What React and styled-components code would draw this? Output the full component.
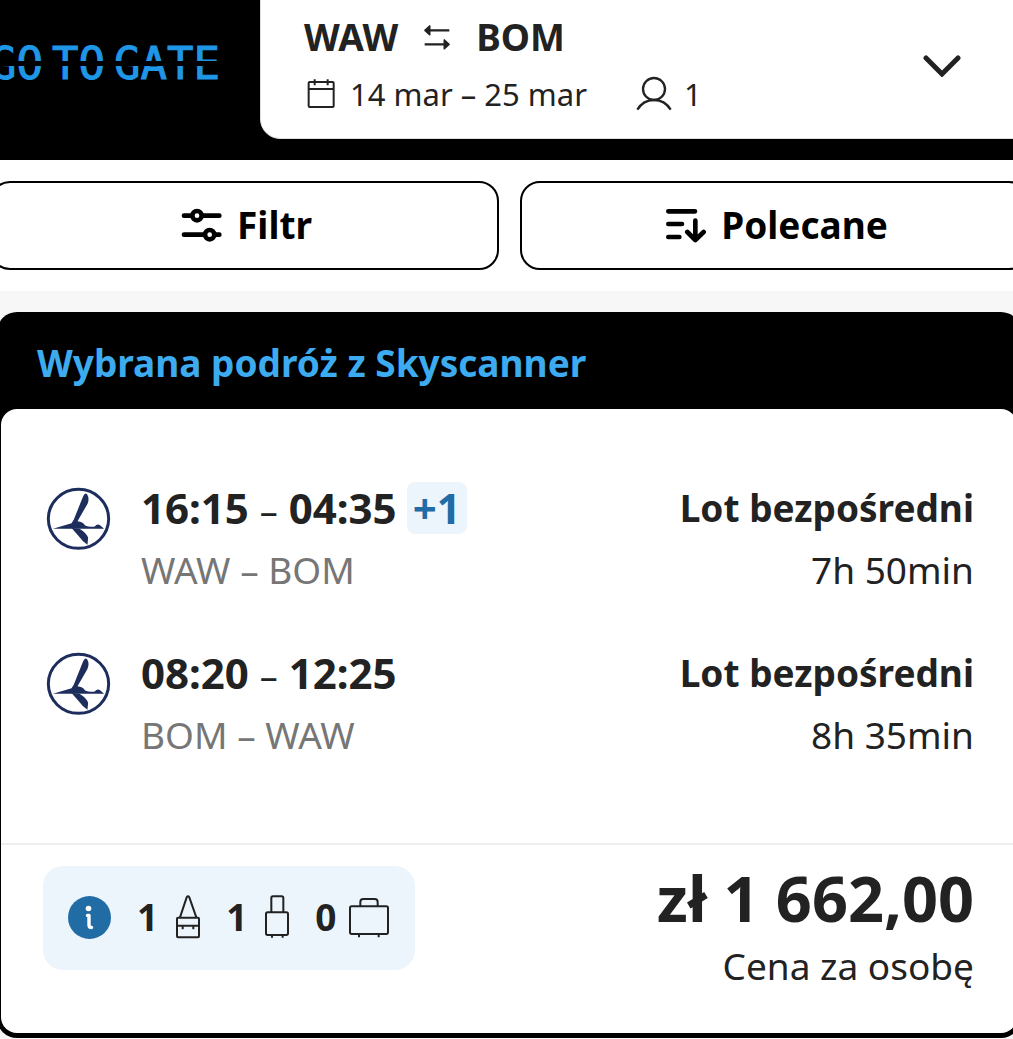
import React from "react";
import styled, { createGlobalStyle } from 'styled-components';

const GlobalStyle = createGlobalStyle`
* {
  box-sizing: border-box;
}
body {
  margin: 0;
  background-color: #f7f7f7;
  color: #222;
  font-family: "Noto Sans", "Open Sans", sans-serif;
  overflow-x: hidden;
}
button {
  font-family: inherit;
  color: inherit;
  cursor: pointer;
}
svg {
  display: block;
  flex: none;
}
`

const Page = styled.div`
overflow: hidden;
`

const Header = styled.header`
display: flex;
align-items: flex-start;
background-color: #000;
padding-bottom: 21px;
`

/* the black strip is the thin cut through the middle of the letters */
const LogoLink = styled.a`
position: relative;
display: flex;
flex: none;
justify-content: flex-end;
gap: 9px;
width: 260px;
padding-top: 39px;
padding-right: 40px;
text-decoration: none;
white-space: nowrap;

&::after {
  content: "";
  position: absolute;
  top: 61px;
  left: 0;
  right: 0;
  height: 5px;
  background-color: #000;
}
`

const LogoText = styled.span`
font-family: "DejaVu Sans Mono", monospace;
font-size: 44px;
line-height: 50px;
color: #1f97e6;
-webkit-text-stroke: 1px #1f97e6;
`

const SearchBox = styled.button`
display: flex;
flex: 1;
align-items: center;
justify-content: space-between;
margin: -20px -20px 0 0;
padding: 32px 71px 20px 43px;
border: 1px solid #ddd;
border-radius: 20px;
background-color: #fff;
text-align: left;
`

const SearchInfo = styled.span`
display: flex;
flex-direction: column;
gap: 9px;
`

const SearchRow = styled.span`
display: flex;
align-items: center;
gap: ${props => props.$gap};
font-size: ${props => props.$size};
font-weight: ${props => props.$bold ? 700 : 400};
line-height: 48px;
`

const SearchItem = styled.span`
display: flex;
align-items: center;
gap: 12px;
`

const Toolbar = styled.div`
padding: 21px 0;
background-color: #fff;
`

const ToolbarInner = styled.div`
display: flex;
gap: 21px;
margin: 0 -16px 0 -10px;
`

const ToolbarButton = styled.button`
display: flex;
flex: 1;
align-items: center;
justify-content: center;
gap: 14px;
height: 89px;
padding: 0 0 2px 4px;
border: 2px solid #000;
border-radius: 20px;
background-color: #fff;
color: #000;
font-size: 37px;
font-weight: 700;
line-height: 52px;
`

const Card = styled.section`
margin: 21px -8px 0 -3px;
padding: 0 4px 5px;
border-radius: 20px;
background-color: #000;
`

const CardTitle = styled.h2`
margin: 0;
padding: 25px 36px 20px;
color: #3dabf0;
font-size: 37px;
font-weight: 700;
line-height: 52px;
`

const CardBody = styled.div`
border-radius: 16px;
background-color: #fff;
`

const Trips = styled.div`
display: flex;
flex-direction: column;
gap: 49px;
padding: 71px 43px 82px 45px;
`

const Trip = styled.div`
display: flex;
align-items: flex-start;
`

const AirlineLogo = styled.svg`
width: 65px;
height: 63px;
margin-top: 7px;
`

const TripColumn = styled.div`
display: flex;
flex: ${props => props.$grow ? 1 : 'none'};
flex-direction: column;
gap: 8px;
margin-left: 30px;
text-align: ${props => props.$grow ? 'left' : 'right'};
`

const Times = styled.div`
display: flex;
align-items: center;
gap: 10px;
height: 56px;
font-size: 42px;
font-weight: 700;
line-height: 56px;
`

const Dash = styled.span`
font-size: 36px;
font-weight: 400;
line-height: 36px;
`

const DayBadge = styled.span`
padding: 0 6px;
border-radius: 8px;
background-color: #edf5fc;
color: #226ca5;
line-height: 52px;
`

const TripText = styled.div`
color: ${props => props.$muted ? '#767676' : '#222'};
font-size: 37px;
font-weight: ${props => props.$bold ? 700 : 400};
line-height: ${props => props.$bold ? '56px' : '52px'};
`

const Footer = styled.div`
display: flex;
align-items: flex-start;
justify-content: space-between;
padding: 15px 43px 41px 42px;
border-top: 2px solid #eee;
`

const Bags = styled.div`
display: flex;
align-items: center;
gap: 26px;
height: 104px;
margin-top: 6px;
padding: 0 26px 2px 25px;
border-radius: 20px;
background-color: #edf5fc;
`

const Bag = styled.span`
display: flex;
align-items: center;
gap: ${props => props.$gap};
font-size: 37px;
font-weight: 700;
line-height: 52px;
`

const PriceColumn = styled.div`
display: flex;
flex-direction: column;
gap: 4px;
text-align: right;
`

const Price = styled.div`
font-size: 63px;
font-weight: 700;
line-height: 76px;
`

const trips = [
    { from: 'WAW', to: 'BOM', start: '16:15', end: '04:35', plus: '+1', time: '7h 50min' },
    { from: 'BOM', to: 'WAW', start: '08:20', end: '12:25', plus: null, time: '8h 35min' },
]

function SwapIcon() {
    return (
        <svg width="26" height="27" viewBox="402 71 78 81" fill="#222" stroke="#222" strokeLinejoin="round">
            <path d="M418 90H478M404 132H464" strokeWidth="7" />
            <path d="M405 90L419 77V103ZM477 132L463 119V145Z" strokeWidth="5" />
        </svg>
    );
}

function CalendarIcon() {
    return (
        <svg width="34" height="34" viewBox="42 233 102 102" fill="none" stroke="#222" strokeWidth="6">
            <rect x="56" y="248" width="75" height="75" rx="3" />
            <path d="M56 269H131M74 240V258M113 240V258" />
        </svg>
    );
}

function PersonIcon() {
    return (
        <svg width="36" height="36" viewBox="1038 229 108 108" fill="none" stroke="#222" strokeWidth="7">
            <circle cx="1092" cy="268" r="33" />
            <path d="M1042 330C1053 312 1070 301 1092 301S1131 312 1142 330" />
        </svg>
    );
}

function ChevronIcon() {
    return (
        <svg width="38" height="22" viewBox="0 0 38 22" fill="none" stroke="#222" strokeWidth="5" strokeLinecap="round">
            <path d="M3 3L19 19L35 3" />
        </svg>
    );
}

function FilterIcon() {
    return (
        <svg width="42" height="36" viewBox="63 110 126 108" fill="none" stroke="#000" strokeWidth="14" strokeLinecap="round">
            <path d="M72 136H94M127 136H178M72 193H132M165 193H178" />
            <circle cx="111" cy="136" r="14" />
            <circle cx="149" cy="193" r="14" />
        </svg>
    );
}

function SortIcon() {
    return (
        <svg width="42" height="36" viewBox="80 113 126 108" fill="none" stroke="#000" strokeWidth="14" strokeLinecap="round" strokeLinejoin="round">
            <path d="M90 126H170M90 164H131M90 203H123M171 154V210M147 188L171 212L196 188" />
        </svg>
    );
}

function InfoIcon() {
    return (
        <svg width="43" height="43" viewBox="0 0 43 43">
            <circle cx="21.5" cy="21.5" r="21.5" fill="#226ca5" />
            <circle cx="20.5" cy="12.5" r="2.8" fill="#fff" />
            <path d="M19.5 19.5H21V29Q21 31.5 23.5 31.5" fill="none" stroke="#fff" strokeWidth="3.4" strokeLinecap="round" strokeLinejoin="round" />
        </svg>
    );
}

function HandbagIcon() {
    return (
        <svg width="24" height="44" viewBox="440 137 72 132" fill="none" stroke="#222" strokeWidth="6" strokeLinejoin="round">
            <path d="M452 204L472 144Q476 138 480 144L501 204" />
            <rect x="443" y="205" width="66" height="59" rx="3" />
            <path d="M443 229H509M460 229V240M492 229V240" />
        </svg>
    );
}

function CabinBagIcon() {
    return (
        <svg width="24" height="44" viewBox="710 137 72 132" fill="none" stroke="#222" strokeWidth="6">
            <path d="M729 189V146Q729 141 734 141H760Q765 141 765 146V189" />
            <rect x="713" y="189" width="66" height="68" rx="5" />
            <path d="M731 257V265M763 257V265" />
        </svg>
    );
}

function SuitcaseIcon() {
    return (
        <svg width="40" height="44" viewBox="954 137 120 132" fill="none" stroke="#222" strokeWidth="6">
            <path d="M988 171V158Q988 149 997 149H1031Q1040 149 1040 158V171" />
            <rect x="957" y="171" width="114" height="83" rx="5" />
            <path d="M984 254V264M1043 254V264" />
        </svg>
    );
}

function CraneLogo() {
    return (
        <AirlineLogo viewBox="50 48 194 190" role="img" aria-label="LOT">
            <ellipse cx="147" cy="144" rx="91" ry="89" fill="none" stroke="#1d2d5c" strokeWidth="9" />
            <g fill="#1d2d5c">
                <path d="M70 174L126 157L133 146L161 76Q167 63 173 70Q181 84 174 99L144 151Q160 152 167 164Q178 169 196 167Q204 157 213 164L224 174Z" />
                <path d="M126 172L150 174Q172 187 176 202L174 222Q158 211 146 194Z" />
            </g>
        </AirlineLogo>
    );
}

function App() {
    return (
        <Page>
            <GlobalStyle />
            <Header>
                <LogoLink href="/">
                    <LogoText>GO</LogoText>
                    <LogoText>TO</LogoText>
                    <LogoText>GATE</LogoText>
                </LogoLink>
                <SearchBox type="button">
                    <SearchInfo>
                        <SearchRow $size="37px" $gap="26px" $bold>
                            <span>WAW</span>
                            <SwapIcon />
                            <span>BOM</span>
                        </SearchRow>
                        <SearchRow $size="31px" $gap="49px">
                            <SearchItem><CalendarIcon />14 mar – 25 mar</SearchItem>
                            <SearchItem><PersonIcon />1</SearchItem>
                        </SearchRow>
                    </SearchInfo>
                    <ChevronIcon />
                </SearchBox>
            </Header>

            <Toolbar>
                <ToolbarInner>
                    <ToolbarButton type="button"><FilterIcon />Filtr</ToolbarButton>
                    <ToolbarButton type="button"><SortIcon />Polecane</ToolbarButton>
                </ToolbarInner>
            </Toolbar>

            <Card>
                <CardTitle>Wybrana podróż z Skyscanner</CardTitle>
                <CardBody>
                    <Trips>
                        {trips.map(trip => (
                            <Trip key={trip.start}>
                                <CraneLogo />
                                <TripColumn $grow>
                                    <Times>
                                        <span>{trip.start} <Dash>–</Dash> {trip.end}</span>
                                        {trip.plus && <DayBadge>{trip.plus}</DayBadge>}
                                    </Times>
                                    <TripText $muted>{trip.from} – {trip.to}</TripText>
                                </TripColumn>
                                <TripColumn>
                                    <TripText $bold>Lot bezpośredni</TripText>
                                    <TripText>{trip.time}</TripText>
                                </TripColumn>
                            </Trip>
                        ))}
                    </Trips>
                    <Footer>
                        <Bags>
                            <InfoIcon />
                            <Bag $gap="18px">1 <HandbagIcon /></Bag>
                            <Bag $gap="18px">1 <CabinBagIcon /></Bag>
                            <Bag $gap="12px">0 <SuitcaseIcon /></Bag>
                        </Bags>
                        <PriceColumn>
                            <Price>zł 1 662,00</Price>
                            <TripText>Cena za osobę</TripText>
                        </PriceColumn>
                    </Footer>
                </CardBody>
            </Card>
        </Page>
    );
}

export default App;
